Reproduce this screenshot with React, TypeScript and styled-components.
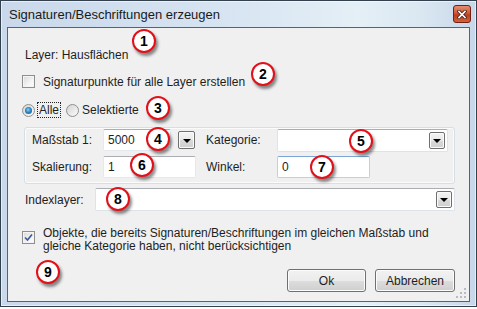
import React from 'react';
import styled, { createGlobalStyle } from 'styled-components';

const GlobalStyle = createGlobalStyle`
    html, body {
        margin: 0;
        padding: 0;
        background: #ffffff;
    }
    body {
        font-family: 'Liberation Sans', Arial, sans-serif;
        font-size: 12px;
        color: #1e1e1e;
    }
`;

const Window = styled.div`
    position: relative;
    box-sizing: border-box;
    width: 477px;
    height: 307px;
    border: 1px solid #33404e;
    padding: 0 6px 4px 6px;
    display: flex;
    flex-direction: column;
    background: linear-gradient(to right, #c9d9eb 0%, #d6e3f1 45%, #e4eff6 75%, #dbe8f2 88%, #c7d7e9 100%);
    box-shadow: inset 0 0 0 1px rgba(255, 255, 255, 0.55);
`;

const TitleBar = styled.div`
    height: 26px;
    flex-shrink: 0;
    display: flex;
    align-items: center;
    justify-content: space-between;
`;

const Title = styled.span`
    padding-left: 2px;
    font-size: 13px;
    color: #1a1a1a;
`;

const CloseButton = styled.div`
    box-sizing: border-box;
    width: 18px;
    height: 18px;
    margin-right: -1px;
    border: 1px solid #6e2412;
    border-radius: 3px;
    display: flex;
    align-items: center;
    justify-content: center;
    background-color: #cf5030;
    background-image: linear-gradient(#e58e70 0%, #d2573a 45%, #c03c1c 55%, #d5603a 100%);
`;

const Client = styled.div`
    position: relative;
    flex: 1;
    border: 1px solid #59636e;
    background: #f0f0f0;
    padding: 20px 14px 0 15px;
    display: flex;
    flex-direction: column;
`;

const Label = styled.div`
    line-height: 14px;
    white-space: nowrap;
`;

const LayerLabel = styled(Label)`
    padding-left: 2px;
`;

const CheckRow = styled.div<{ $top: number }>`
    display: flex;
    align-items: flex-start;
    margin-top: ${(p) => p.$top}px;
    margin-left: -1px;
    gap: 8px;
`;

const CheckBoxBox = styled.div<{ $offset?: number }>`
    box-sizing: border-box;
    width: 13px;
    height: 13px;
    flex-shrink: 0;
    margin-top: ${(p) => p.$offset ?? 0}px;
    border: 1px solid #8e8f8f;
    background: linear-gradient(135deg, #d8d8d8 0%, #f4f4f4 60%, #ffffff 100%);
    box-shadow: inset 0 0 0 1px #f4f4f4;
    display: flex;
    align-items: center;
    justify-content: center;
`;

const MultiLine = styled.div`
    line-height: 13px;
    white-space: nowrap;
`;

const RadioRow = styled.div`
    display: flex;
    align-items: center;
    height: 16px;
    margin-top: 13px;
    margin-left: -1px;
`;

const RadioCircle = styled.div<{ $checked?: boolean }>`
    box-sizing: border-box;
    width: 13px;
    height: 13px;
    border-radius: 50%;
    border: 1px solid #8e8f8f;
    background: linear-gradient(135deg, #d4d4d4, #fbfbfb);
    display: flex;
    align-items: center;
    justify-content: center;
    &::after {
        content: '';
        display: ${(p) => (p.$checked ? 'block' : 'none')};
        width: 7px;
        height: 7px;
        border-radius: 50%;
        background: radial-gradient(circle at 45% 40%, #8fd0f2 0%, #2c86c4 45%, #1b4f80 100%);
    }
`;

const FocusLabel = styled.span`
    margin-left: 2px;
    padding: 0 1px;
    line-height: 14px;
    border: 1px dotted #222;
`;

const RadioText = styled.span`
    margin-left: 3px;
    line-height: 14px;
`;

const SecondRadio = styled.div`
    margin-left: 5px;
    display: flex;
    align-items: center;
`;

const GroupBox = styled.div`
    margin-top: 9px;
    margin-left: 1px;
    border: 1px solid #d5dfe5;
    border-radius: 3px;
    box-shadow: inset 0 0 0 1px #fbfbfb;
    padding: 1px 0 5px 7px;
    display: grid;
    grid-template-columns: 71px 103px 71px 171px;
    grid-template-rows: 22px 22px;
    row-gap: 5px;
    align-items: center;
`;

const FieldPair = styled.div`
    display: flex;
    align-items: center;
    gap: 7px;
`;

const TextField = styled.div<{ $width: number; $focused?: boolean }>`
    box-sizing: border-box;
    width: ${(p) => p.$width}px;
    height: 22px;
    background: #ffffff;
    border: 1px solid ${(p) => (p.$focused ? '#b8d2ec' : '#e3e9ef')};
    border-top-color: ${(p) => (p.$focused ? '#7ba6d4' : '#abadb3')};
    border-radius: 2px;
    padding-left: 4px;
    display: flex;
    align-items: center;
    line-height: 14px;
`;

const Combo = styled.div<{ $width?: number; $height?: number }>`
    box-sizing: border-box;
    width: ${(p) => (p.$width ? `${p.$width}px` : 'auto')};
    flex: ${(p) => (p.$width ? 'none' : '1')};
    height: ${(p) => p.$height ?? 23}px;
    background: #ffffff;
    border: 1px solid #dde3ea;
    border-top-color: #abadb3;
    border-radius: 2px;
    display: flex;
    align-items: center;
    justify-content: flex-end;
    padding-right: 2px;
`;

const DropButton = styled.div<{ $size?: number }>`
    box-sizing: border-box;
    width: ${(p) => p.$size ?? 16}px;
    height: ${(p) => (p.$size ?? 16) + 1}px;
    border: 1px solid #6f6f6f;
    border-radius: 2px;
    background: linear-gradient(#f4f4f4 0%, #e8e8e8 50%, #d9d9d9 51%, #cfcfcf 100%);
    box-shadow: inset 0 0 0 1px #fafafa;
    display: flex;
    align-items: center;
    justify-content: center;
    &::after {
        content: '';
        width: 0;
        height: 0;
        border-left: 4px solid transparent;
        border-right: 4px solid transparent;
        border-top: 4px solid #000;
        margin-top: 1px;
    }
`;

const IndexRow = styled.div`
    margin-top: 4px;
    display: flex;
    align-items: center;
`;

const IndexLabel = styled(Label)`
    width: 70px;
    padding-left: 2px;
`;

const ButtonRow = styled.div`
    margin-top: 16px;
    display: flex;
    justify-content: flex-end;
    gap: 9px;
`;

const DialogButton = styled.button<{ $width: number }>`
    box-sizing: border-box;
    width: ${(p) => p.$width}px;
    height: 23px;
    padding: 0;
    font-family: 'Liberation Sans', Arial, sans-serif;
    font-size: 12px;
    color: #1e1e1e;
    border: 1px solid #707070;
    border-radius: 3px;
    background: linear-gradient(#f2f2f2 0%, #ebebeb 50%, #dddddd 51%, #cfcfcf 100%);
    box-shadow: inset 0 0 0 1px #fcfcfc;
`;

const Grip = styled.svg`
    position: absolute;
    right: 2px;
    bottom: 2px;
`;

const Marker = styled.div<{ $x: number; $y: number }>`
    position: absolute;
    left: ${(p) => p.$x - 12}px;
    top: ${(p) => p.$y - 12}px;
    box-sizing: border-box;
    width: 24px;
    height: 24px;
    border-radius: 50%;
    border: 2px solid #e3101a;
    background: #ffffff;
    box-shadow: 2px 3px 3px rgba(0, 0, 0, 0.45);
    display: flex;
    align-items: center;
    justify-content: center;
    font-family: 'Liberation Sans', Arial, sans-serif;
    font-weight: 700;
    font-size: 14px;
    color: #000;
`;

const markers = [
    { n: 1, x: 143, y: 40 },
    { n: 2, x: 262, y: 73 },
    { n: 3, x: 157, y: 107 },
    { n: 4, x: 157, y: 138 },
    { n: 5, x: 360, y: 140 },
    { n: 6, x: 141, y: 164 },
    { n: 7, x: 321, y: 166 },
    { n: 8, x: 117, y: 198 },
    { n: 9, x: 47, y: 271 },
];

function App() {
    return (
        <>
            <GlobalStyle />
            <Window>
                <TitleBar>
                    <Title>Signaturen/Beschriftungen erzeugen</Title>
                    <CloseButton>
                        <svg width="10" height="9" viewBox="0 0 10 9">
                            <path d="M2 1.5 L8 7.5 M8 1.5 L2 7.5" stroke="#4a2a22" strokeWidth="3.4" strokeLinecap="square" />
                            <path d="M2 1.5 L8 7.5 M8 1.5 L2 7.5" stroke="#ffffff" strokeWidth="1.6" strokeLinecap="square" />
                        </svg>
                    </CloseButton>
                </TitleBar>
                <Client>
                    <LayerLabel>Layer: Hausflächen</LayerLabel>
                    <CheckRow $top={13}>
                        <CheckBoxBox />
                        <Label>Signaturpunkte für alle Layer erstellen</Label>
                    </CheckRow>
                    <RadioRow>
                        <RadioCircle $checked />
                        <FocusLabel>Alle</FocusLabel>
                        <SecondRadio>
                            <RadioCircle />
                            <RadioText>Selektierte</RadioText>
                        </SecondRadio>
                    </RadioRow>
                    <GroupBox>
                        <Label>Maßstab 1:</Label>
                        <FieldPair>
                            <TextField $width={68}>5000</TextField>
                            <DropButton $size={17} />
                        </FieldPair>
                        <Label>Kategorie:</Label>
                        <Combo $width={171} $height={23}>
                            <DropButton />
                        </Combo>
                        <Label>Skalierung:</Label>
                        <TextField $width={93}>1</TextField>
                        <Label>Winkel:</Label>
                        <TextField $width={93} $focused>0</TextField>
                    </GroupBox>
                    <IndexRow>
                        <IndexLabel>Indexlayer:</IndexLabel>
                        <Combo>
                            <DropButton />
                        </Combo>
                    </IndexRow>
                    <CheckRow $top={16}>
                        <CheckBoxBox $offset={4}>
                            <svg width="9" height="9" viewBox="0 0 9 9">
                                <path d="M1 4.5 L3.5 7 L8 1.5" fill="none" stroke="#3d5aa0" strokeWidth="1.7" />
                            </svg>
                        </CheckBoxBox>
                        <MultiLine>
                            Objekte, die bereits Signaturen/Beschriftungen im gleichen Maßstab und
                            <br />
                            gleiche Kategorie haben, nicht berücksichtigen
                        </MultiLine>
                    </CheckRow>
                    <ButtonRow>
                        <DialogButton $width={79}>Ok</DialogButton>
                        <DialogButton $width={80}>Abbrechen</DialogButton>
                    </ButtonRow>
                    <Grip width="12" height="12" viewBox="0 0 12 12">
                        {[
                            [9, 1], [9, 5], [5, 5], [9, 9], [5, 9], [1, 9],
                        ].map(([x, y]) => (
                            <rect key={`${x}-${y}`} x={x} y={y} width="2" height="2" fill="#b8bcc2" />
                        ))}
                    </Grip>
                </Client>
                {markers.map((m) => (
                    <Marker key={m.n} $x={m.x} $y={m.y}>
                        {m.n}
                    </Marker>
                ))}
            </Window>
        </>
    );
}

export default App;
